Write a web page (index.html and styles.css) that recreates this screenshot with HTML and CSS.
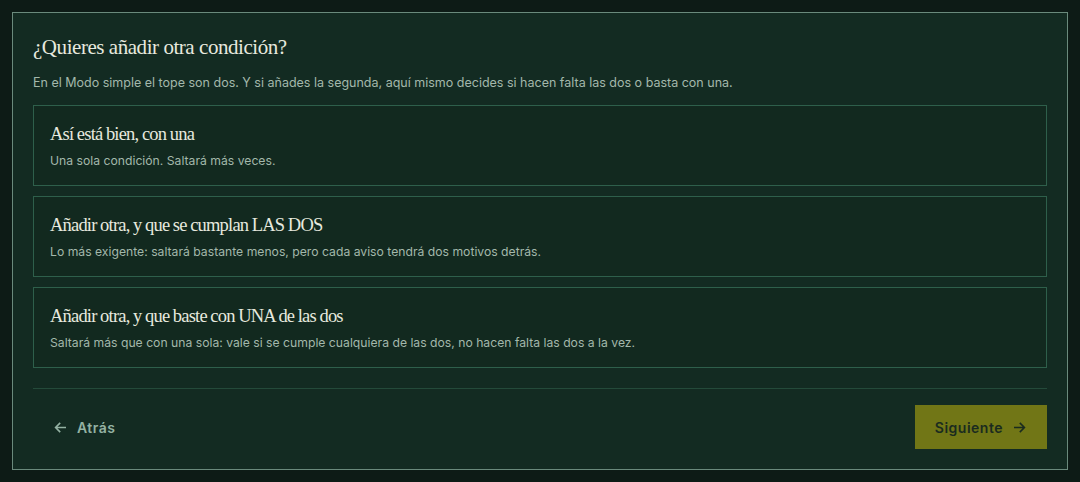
FILE: index.html
```html
<!DOCTYPE html>
<html lang="es">
<head>
<meta charset="utf-8">
<link rel="stylesheet" href="styles.css">
</head>
<body>
<div class="panel">
  <h2 class="title">¿Quieres añadir otra condición?</h2>
  <p class="lead">En el Modo simple el tope son dos. Y si añades la segunda, aquí mismo decides si hacen falta las dos o basta con una.</p>
  <div class="options">
    <div class="option">
      <div class="opt-title">Así está bien, con una</div>
      <div class="opt-desc">Una sola condición. Saltará más veces.</div>
    </div>
    <div class="option">
      <div class="opt-title">Añadir otra, y que se cumplan LAS DOS</div>
      <div class="opt-desc">Lo más exigente: saltará bastante menos, pero cada aviso tendrá dos motivos detrás.</div>
    </div>
    <div class="option">
      <div class="opt-title">Añadir otra, y que baste con UNA de las dos</div>
      <div class="opt-desc">Saltará más que con una sola: vale si se cumple cualquiera de las dos, no hacen falta las dos a la vez.</div>
    </div>
  </div>
  <div class="footer">
    <button class="btn-back"><svg width="13" height="13" viewBox="0 0 13 13"><path d="M12 6.5H1.6M6.2 1.9L1.6 6.5l4.6 4.6" fill="none" stroke="currentColor" stroke-width="1.6"/></svg><span>Atrás</span></button>
    <button class="btn-next"><span>Siguiente</span><svg width="13" height="13" viewBox="0 0 13 13"><path d="M1 6.5h10.4M6.8 1.9l4.6 4.6-4.6 4.6" fill="none" stroke="currentColor" stroke-width="1.6"/></svg></button>
  </div>
</div>
</body>
</html>
```

FILE: styles.css
```css
html, body { margin: 0; padding: 0; }
body {
  background: #0d1b16;
  font-family: Inter, "Liberation Sans", sans-serif;
  padding: 12px;
  height: 482px;
  box-sizing: border-box;
}
.panel {
  background: #132b22;
  border: 1px solid #6a8a7c;
  padding: 20px;
  height: 458px;
  box-sizing: border-box;
  display: flex;
  flex-direction: column;
}
.title {
  margin: 0;
  font-family: "Liberation Serif", serif;
  font-weight: 400;
  font-size: 21px;
  line-height: 28px;
  color: #e7e9df;
  letter-spacing: -0.45px;
}
.lead {
  margin: 13px 0 0;
  font-size: 12.5px;
  line-height: 18px;
  color: #a3b8ab;
}
.options {
  margin-top: 13px;
  display: flex;
  flex-direction: column;
  gap: 10px;
}
.option {
  border: 1px solid #2e5f4b;
  background: #12291f;
  height: 81px;
  box-sizing: border-box;
  padding: 16px 16px 0;
}
.opt-title {
  font-family: "Liberation Serif", serif;
  font-size: 18.5px;
  line-height: 24px;
  color: #e7e9df;
  letter-spacing: -0.8px;
  word-spacing: -0.3px;
}
.opt-desc {
  margin-top: 7px;
  font-size: 12.2px;
  line-height: 16px;
  color: #a3b8ab;
}
.footer {
  margin-top: 20px;
  border-top: 1px solid #244a3a;
  padding-top: 16px;
  display: flex;
  justify-content: space-between;
  align-items: center;
}
button {
  font-family: inherit;
  border: 0;
  cursor: pointer;
  display: flex;
  align-items: center;
  gap: 10px;
  font-size: 14px;
  font-weight: 600;
  letter-spacing: 0.5px;
  height: 44px;
}
.btn-back {
  background: transparent;
  color: #94b2a3;
  padding: 0 20px 0 21px;
}
.btn-next {
  background: #717616;
  color: #1a2b1f;
  padding: 0 21px 0 20px;
}
```
